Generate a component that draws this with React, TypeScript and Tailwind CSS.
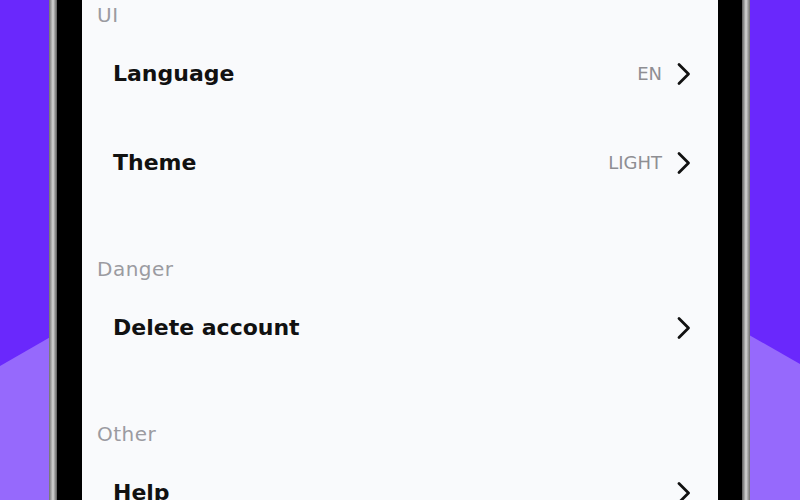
const sections = [
  {
    title: 'UI',
    items: [
      { label: 'Language', value: 'EN' },
      { label: 'Theme', value: 'LIGHT' },
    ],
  },
  {
    title: 'Danger',
    items: [{ label: 'Delete account', value: '' }],
  },
  {
    title: 'Other',
    items: [{ label: 'Help', value: '' }],
  },
];

function Chevron() {
  return (
    <svg width="14" height="24" viewBox="0 0 14 24" fill="none" className="shrink-0">
      <polyline
        points="2,2.5 11.5,12 2,21.5"
        stroke="#111111"
        strokeWidth="2.8"
        strokeLinecap="round"
        strokeLinejoin="round"
      />
    </svg>
  );
}

export default function App() {
  return (
    <div
      className="relative h-[500px] w-[800px] overflow-hidden bg-[#6a28fc]"
      style={{ fontFamily: '"DejaVu Sans", Inter, sans-serif' }}
    >
      {/* backdrop shape */}
      <svg className="absolute inset-0" width="800" height="500" viewBox="0 0 800 500">
        <polygon points="0,366 400,136 800,364 800,500 0,500" fill="#9669fc" />
      </svg>

      {/* Phone */}
      <div className="relative ml-[49px] flex h-full w-[701px]">
        <div className="w-[8px] bg-gradient-to-r from-[#6e6e6e] via-[#d6d6d6] to-[#5c5c5c]" />
        <div className="w-[25px] bg-black" />

        <div className="w-[636px] bg-[#f9fafc] pt-[4px]">
          {sections.map((section, i) => (
            <div key={section.title} className={i > 0 ? 'mt-[51px]' : ''}>
              <div className="flex h-[25px] items-center pb-[4px] pl-[15px] text-[20px] tracking-[0.5px] text-[#9b9ba1]">
                {section.title}
              </div>
              {section.items.map((item) => (
                <div key={item.label} className="flex h-[89px] items-center pl-[31px] pr-[27px]">
                  <span className="flex-1 text-[22px] font-bold text-[#111111]">{item.label}</span>
                  {item.value && (
                    <span className="mr-[15px] text-[18px] text-[#8e8e93]">{item.value}</span>
                  )}
                  <Chevron />
                </div>
              ))}
            </div>
          ))}
        </div>

        <div className="w-[24px] bg-black" />
        <div className="w-[8px] bg-gradient-to-r from-[#5c5c5c] via-[#d6d6d6] to-[#6e6e6e]" />
      </div>
    </div>
  );
}
